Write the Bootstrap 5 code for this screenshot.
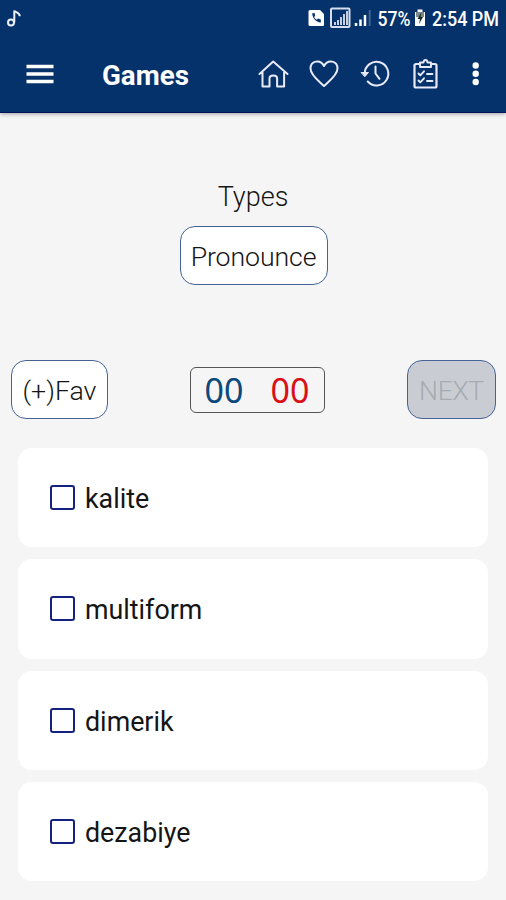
<!DOCTYPE html>
<html lang="en">
<head>
<meta charset="utf-8">
<meta name="viewport" content="width=device-width, initial-scale=1">
<title>Games</title>
<link href="https://cdn.jsdelivr.net/npm/bootstrap@5.3.0/dist/css/bootstrap.min.css" rel="stylesheet">
<style>
body{font-family:Roboto,"Liberation Sans",sans-serif;background:#f5f5f5;color:#151515;height:900px;overflow:hidden}
svg{display:block;flex:none}
.app-head{height:113px;background:#06326b;color:#fff;border-bottom:1px solid #04145a;box-shadow:0 1px 4px rgba(0,0,0,.35)}
.status{height:37px;padding:0 5px 0 6px}
.tools{height:74px;padding-left:26px;padding-right:20px}
.title{font-size:27.7px;font-weight:700;line-height:32px;margin-left:48px;padding-top:3px}
.ic{background:none;border:0;padding:3px 0 0;color:#eeeefa}
.pill{font-size:26.7px;font-weight:300;line-height:32px;height:59px;padding:3px 0 0;border:1.3px solid #456396;border-radius:15px;background:#fff;color:#151515}
.pill:disabled{background:#c9cdd3;color:#a7abb0;border-color:#456396;opacity:1}
.types{padding-top:68px}
.types-label{font-size:27px;font-weight:300;line-height:32px;margin-bottom:13px}
.w-type{width:148px;letter-spacing:-.1px;margin-left:1px}.w-fav{width:97px}.w-next{width:89px;letter-spacing:-.4px}
.controls{margin-top:75px;padding:0 10px 0 11px}
.score{width:135px;height:46px;border:1.5px solid #555;border-radius:6px;font-family:"Noto Sans",Roboto,sans-serif;font-size:34px;line-height:40px;margin-right:1px;gap:27px;padding-top:1px}
.right{color:#0c4a7d}.wrong{color:#d81118}
.answers{margin-top:29px;padding:0 18px;gap:12px}
.answer{height:99.3px;border-radius:14px;background:#fff;padding:0 0 0 32px;gap:10px;font-size:26.8px}
.answer .form-check-input{width:25px;height:25px;margin:0;border:2px solid #13217f;border-radius:3px;flex:none}
.answer span{padding-top:3px}
</style>
</head>
<body>
<header class="app-head position-relative">
  <div class="status d-flex justify-content-between align-items-center">
    <svg width="18" height="37" viewBox="0 0 18 37" fill="none" stroke="#eef0fa" stroke-width="2"><circle cx="5" cy="22.500" r="3"/><path d="M8.300 22.500V10.500c.5 2 5.500 1.500 5.500 5.800"/></svg>
    <svg width="197" height="37" viewBox="304 0 197 37">
      <path d="M310 10h10l4 4v11q0 1-1 1h-13q-1.500 0-1.500-1.500v-13q0-1.500 1.500-1.500z" fill="#fff"/>
      <path d="M312.200 13.300c.2 5.200 3.800 8.700 8.600 9.200v-3l-2.800-.9-1.400 1.200c-1.200-.7-2-1.700-2.500-2.800l1.100-1.300-.7-2.800z" fill="#06326b"/>
      <rect x="331" y="8.500" width="18.500" height="18.500" rx="1" fill="none" stroke="#d8dced" stroke-width="2"/>
      <path d="M335 25v-3M338 25v-5M341 25v-8M344 25V14M347 25V11" stroke="#dfe2f0" stroke-width="1.800"/>
      <path d="M356 26v-3M360.500 26v-6.500M365 26V15" stroke="#fff" stroke-width="2.500"/><path d="M369.700 26V10" stroke="#3d6394" stroke-width="2"/>
      <g fill="#fff" font-family="Roboto,Liberation Sans,sans-serif" font-size="21" font-weight="500"><text x="377.500" y="26" textLength="33" lengthAdjust="spacingAndGlyphs">57%</text><text x="432" y="26" textLength="67" lengthAdjust="spacingAndGlyphs">2:54 PM</text></g>
      <path d="M415 12h2.500v-2.500h5V12h2.500v14h-10z" fill="#fff"/><path d="M416 12h8v5h-8z" fill="#7c8988"/><path d="M421.500 12l-4 7h2.500l-1 5 4-7h-2.500z" fill="#142b24"/>
    </svg>
  </div>
  <nav class="tools d-flex align-items-center">
    <button class="ic" aria-label="Menu"><svg width="28" height="28" viewBox="0 0 28 28" stroke="#fff" stroke-width="3.500"><path d="M.5 4.500h27M.5 12h27M.5 19.500h27"/></svg></button>
    <h1 class="title mb-0">Games</h1>
    <div class="d-flex ms-auto me-n2">
      <svg width="236" height="40" viewBox="250 54 236 40" fill="none" stroke="#e9eafa" stroke-width="2" stroke-linejoin="round" stroke-linecap="round">
        <path d="M259.500 74l13.700-12.500L287.500 74M262.500 72v14.500h7v-8q0-3 3.800-3t3.800 3v8h7V72"/>
        <path d="M324 86C320 82 310.500 75.500 310.500 68.500c0-7.500 9.500-10 13.500-2.500 4-7.500 13.500-5 13.500 2.500 0 7-9.500 13.500-13.500 17.500z"/>
        <path d="M364.700 73.500a11.800 11.800 0 1 1 3 8M375.500 66.500v7l4 5.300"/><path d="M361.500 72.500h7l-3.500 4z" fill="#e9eafa" stroke-width="1"/>
        <g stroke-width="2.200"><path d="M419.500 64H416q-1.500 0-1.500 1.500V86q0 1.500 1.500 1.500h19q1.500 0 1.500-1.500V65.500q0-1.500-1.500-1.500h-3.500"/><path d="M420 67v-4.500h3.500q.2-2.500 2-2.500t2 2.500h3.500V67z" stroke-width="1.900"/><path d="M418.500 73.500l1.800 1.800 3.700-4M418.500 80.500l1.800 1.800 3.700-4M427 74h5.500M427 81h5.500" stroke-width="1.900"/></g>
        <g fill="#fff" stroke="none"><circle cx="475.700" cy="65.500" r="3.200"/><circle cx="475.700" cy="73.700" r="3.200"/><circle cx="475.700" cy="82" r="3.200"/></g>
      </svg>
    </div>
  </nav>
</header>
<main>
  <section class="types d-flex flex-column align-items-center">
    <div class="types-label">Types</div>
    <button class="btn pill w-type">Pronounce</button>
  </section>
  <section class="controls d-flex justify-content-between align-items-center">
    <button class="btn pill w-fav">(+)Fav</button>
    <div class="score d-flex justify-content-center align-items-center"><span class="right">00</span><span class="wrong">00</span></div>
    <button class="btn pill w-next" disabled>NEXT</button>
  </section>
  <section class="answers d-flex flex-column">
    <label class="answer d-flex align-items-center"><input class="form-check-input" type="checkbox"><span>kalite</span></label>
    <label class="answer d-flex align-items-center"><input class="form-check-input" type="checkbox"><span>multiform</span></label>
    <label class="answer d-flex align-items-center"><input class="form-check-input" type="checkbox"><span>dimerik</span></label>
    <label class="answer d-flex align-items-center"><input class="form-check-input" type="checkbox"><span>dezabiye</span></label>
  </section>
</main>
<script src="https://cdn.jsdelivr.net/npm/bootstrap@5.3.0/dist/js/bootstrap.bundle.min.js"></script>
</body>
</html>
